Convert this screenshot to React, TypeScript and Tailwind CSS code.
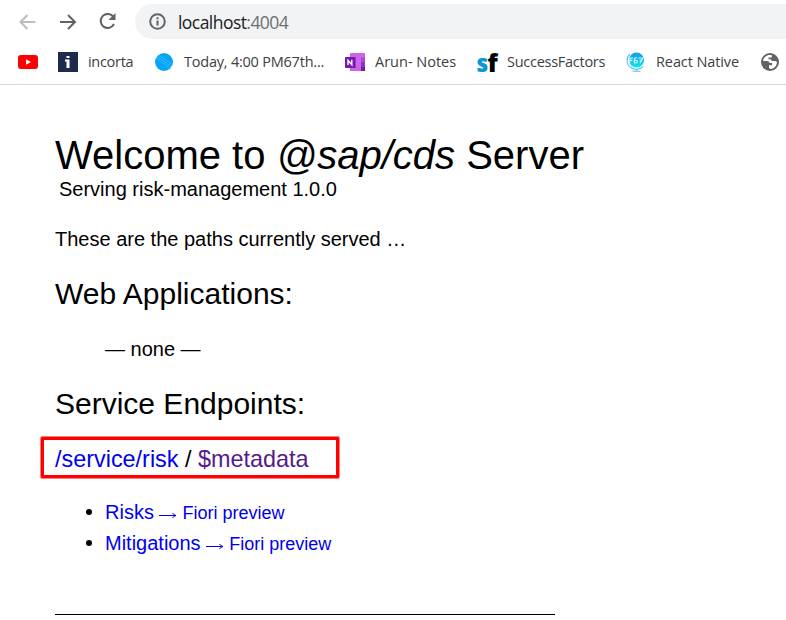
import type { ReactNode } from "react";

function Bookmark({ icon, label, className }: { icon: ReactNode; label?: string; className: string }) {
  return (
    <div className={`flex h-[22px] shrink-0 items-center gap-[10px] whitespace-nowrap ${className}`}>
      <span className="flex w-5 shrink-0 justify-center">{icon}</span>
      {label && <span>{label}</span>}
    </div>
  );
}

const YouTube = () => (
  <svg width="20" height="14" viewBox="0 0 20 14">
    <rect width="20" height="14" rx="3" fill="#f00" />
    <path d="M8 4.2v5.6L13 7z" fill="#fff" />
  </svg>
);

const Incorta = () => (
  <svg width="20" height="20" viewBox="0 0 20 20">
    <rect width="20" height="20" fill="#1d2c4c" />
    <path d="M8.5 4h3v2h-3zM7 7.5h4.5V16h-3V9.4H7z" fill="#fff" />
  </svg>
);

const BlueBall = () => (
  <svg width="18" height="18" viewBox="0 0 18 18">
    <circle cx="9" cy="9" r="9" fill="#05a6f7" />
    <g stroke="#83d2fb" strokeWidth=".6" strokeDasharray="1.5 .7" fill="none">
      <path d="M1 5l13.5 10M2.5 3.5l13.5 10M4.5 2.5l12 8.5" />
    </g>
  </svg>
);

const OneNote = () => (
  <svg width="20" height="18" viewBox="0 0 20 18">
    <rect x="5" width="15" height="18" rx="1" fill="#ca64ea" />
    <path d="M16 4.5h4V9h-4z" fill="#ae4bd5" />
    <path d="M16 9h4v4.5h-4z" fill="#9332bf" />
    <path d="M16 13.5h4V18h-4z" fill="#7719aa" />
    <path d="M5 4h6v11H5z" fill="#9c3bc0" />
    <rect y="4" width="10" height="11" rx=".7" fill="#7719aa" />
    <path d="M3 12V7.3L6.8 11.8V6.8" fill="none" stroke="#fff" strokeWidth="1.4" />
  </svg>
);

const SuccessFactorsLogo = () => (
  <svg width="20" height="20" viewBox="0 0 20 20" className="overflow-visible font-['Open_Sans'] font-extrabold">
    <text x="-.5" y="19.5" fontSize="25" fill="#0b96d6" textLength="11.5" lengthAdjust="spacingAndGlyphs">s</text>
    <text x="10.5" y="20" fontSize="25.5" fill="#000" textLength="10" lengthAdjust="spacingAndGlyphs">f</text>
  </svg>
);

const Globe67 = () => (
  <svg width="20" height="20" viewBox="0 0 20 20">
    <defs>
      <linearGradient id="sphere" x1="0" y1="0" x2="0" y2="1">
        <stop stopColor="#1796e8" />
        <stop offset="1" stopColor="#0deaf0" />
      </linearGradient>
    </defs>
    <path d="M4 2C0 5.5 0 12 4.5 15.3c4 3 9 2.8 12.5-.8M10.5 17v2M6.5 19.3h8" fill="none" stroke="#5ec4ef" strokeWidth="1.1" />
    <circle cx="10.5" cy="8" r="7.6" fill="url(#sphere)" />
    <path d="M3.8 11V6H7M3.8 8.4h2.4M11 5.8C9 5.3 8.1 6.5 8.1 9c0 2.8 3.6 2.2 3.3.2-.3-1.4-2.6-1.3-3.1 0M12.5 6H17l-3 5M13.5 8.3h2.8" fill="none" stroke="#d8f8ff" strokeWidth="1.1" />
  </svg>
);

const GreyGlobe = () => (
  <svg width="18" height="18" viewBox="0 0 18 18">
    <circle cx="9" cy="9" r="9" fill="#5f6368" />
    <path d="M10.8 2.2C6.3 1.2 2.6 4 2 8h3.8c1.6 0 2.7.8 2.7 2.1h2.6v2.2H8v2.6l1.7 1c3.7-.3 6.3-3.3 6.2-6.9-.5-.9-1.2-1.2-2-1h-2.2c-1.2 0-1.8-.6-1.8-1.7H7.5V4.4h3.3z" fill="#fff" />
  </svg>
);

const navStroke = { fill: "none", strokeWidth: 2 };

function BrowserBar() {
  return (
    <header className="h-[85px] border-b border-[#d5d7da] bg-white pt-1 font-['Open_Sans','Noto_Sans',sans-serif] text-[#3c4043]">
      <div className="flex h-[35px] items-center pl-[19px]">
        <svg className="mr-6 shrink-0" width="17" height="16" viewBox="0 0 17 16" {...navStroke} stroke="#babcbe">
          <path d="M16.5 8H2M8.5 1L1.5 8l7 7" />
        </svg>
        <svg className="mr-[22px] shrink-0" width="17" height="16" viewBox="0 0 17 16" {...navStroke} stroke="#5f6368">
          <path d="M0 8h15M8 1l7 7-7 7" />
        </svg>
        <svg className="mr-[19px] shrink-0" width="17" height="17" viewBox="0 0 17 17" {...navStroke} stroke="#5f6368">
          <path d="M14.5 4A7 7 0 1 0 15 11" />
          <path d="M16.5 0v7h-7z" fill="#5f6368" stroke="none" />
        </svg>
        <div className="flex h-[35px] flex-1 items-center rounded-l-full bg-[#f1f3f4] pl-[14px]">
          <svg width="17" height="17" viewBox="0 0 17 17" {...navStroke} stroke="#5f6368">
            <circle cx="8.5" cy="8.5" r="7.3" />
            <path d="M8.5 7.5v5M8.5 4.3v2" />
          </svg>
          <span className="ml-3 text-[17.5px] leading-[22px] tracking-[-0.55px] text-[#202124]">
            localhost<span className="text-[#6b6f73]">:4004</span>
          </span>
        </div>
      </div>
      <nav className="mt-3 flex pl-[18px] text-[14.5px] leading-[22px]">
        <Bookmark className="w-10" icon={<YouTube />} />
        <Bookmark className="w-24 tracking-[-0.3px]" icon={<Incorta />} label="incorta" />
        <Bookmark className="w-[191px] tracking-[-0.22px]" icon={<BlueBall />} label="Today, 4:00 PM67th..." />
        <Bookmark className="w-[132px] tracking-[0px]" icon={<OneNote />} label="Arun- Notes" />
        <Bookmark className="w-[149px] tracking-[-0.27px]" icon={<SuccessFactorsLogo />} label="SuccessFactors" />
        <Bookmark className="w-[134px] tracking-[-0.1px]" icon={<Globe67 />} label="React Native" />
        <Bookmark className="w-5" icon={<GreyGlobe />} />
      </nav>
    </header>
  );
}

const Arrow = () => (
  <svg className="inline-block align-baseline" width="18" height="8" viewBox="0 0 18 8" fill="none" stroke="#0000ee">
    <path d="M0 4.5h17" />
    <path d="M13.5 2q1 2 3.5 2.5-2.5.5-3.5 2.5" />
  </svg>
);

function Entity({ name }: { name: string }) {
  return (
    <li className="flex h-[22px] items-center text-[#0000ee]">
      <span className="ml-[31px] mr-[13px] size-[6px] rounded-full bg-black" />
      <a className="whitespace-pre">
        {name} <span className="text-[18px]"><Arrow /> Fiori preview</span>
      </a>
    </li>
  );
}

export default function App() {
  return (
    <div className="h-[620px] w-[786px] overflow-hidden bg-white">
      <BrowserBar />
      <main className="whitespace-nowrap pl-[55px] pt-[47px] font-['Liberation_Sans',Arial,sans-serif] text-[20px] leading-[22px] text-black">
        <h1 className="text-[40px] leading-[46px]">
          Welcome to <i>@sap/cds</i> Server
        </h1>
        <p className="pl-1">Serving risk-management 1.0.0</p>
        <p className="mt-7">These are the paths currently served …</p>
        <h2 className="mt-[27px] text-[30px] leading-[34px]">Web Applications:</h2>
        <p className="mt-[27px] pl-[50px]">— none —</p>
        <h2 className="mt-[27px] text-[30px] leading-[34px]">Service Endpoints:</h2>
        <h3 className="relative mt-[24px] text-[23.4px] leading-[28px]">
          <span className="absolute -left-[14px] -top-[8px] h-[41px] w-[298px] rounded-[1px] border-3 border-[#ff0000] ring-1 ring-[#ff0000]/50" />
          <a className="text-[#0000ee]">/service/risk</a> / <a className="text-[#551a8b]">$metadata</a>
        </h3>
        <ul className="mt-7 flex flex-col gap-[9px]">
          <Entity name="Risks" />
          <Entity name="Mitigations" />
        </ul>
        <hr className="mt-[60px] w-[500px] border-black" />
      </main>
    </div>
  );
}
